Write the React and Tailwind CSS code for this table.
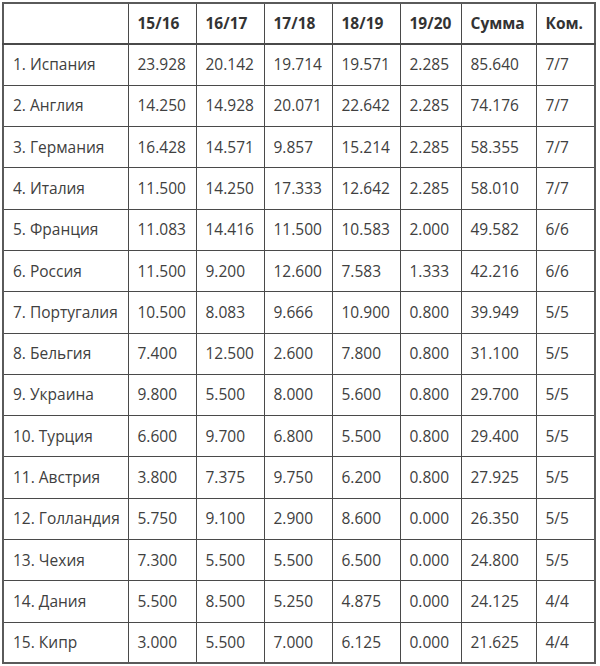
const rows = [
  ['1. Испания', '23.928', '20.142', '19.714', '19.571', '2.285', '85.640', '7/7'],
  ['2. Англия', '14.250', '14.928', '20.071', '22.642', '2.285', '74.176', '7/7'],
  ['3. Германия', '16.428', '14.571', '9.857', '15.214', '2.285', '58.355', '7/7'],
  ['4. Италия', '11.500', '14.250', '17.333', '12.642', '2.285', '58.010', '7/7'],
  ['5. Франция', '11.083', '14.416', '11.500', '10.583', '2.000', '49.582', '6/6'],
  ['6. Россия', '11.500', '9.200', '12.600', '7.583', '1.333', '42.216', '6/6'],
  ['7. Португалия', '10.500', '8.083', '9.666', '10.900', '0.800', '39.949', '5/5'],
  ['8. Бельгия', '7.400', '12.500', '2.600', '7.800', '0.800', '31.100', '5/5'],
  ['9. Украина', '9.800', '5.500', '8.000', '5.600', '0.800', '29.700', '5/5'],
  ['10. Турция', '6.600', '9.700', '6.800', '5.500', '0.800', '29.400', '5/5'],
  ['11. Австрия', '3.800', '7.375', '9.750', '6.200', '0.800', '27.925', '5/5'],
  ['12. Голландия', '5.750', '9.100', '2.900', '8.600', '0.000', '26.350', '5/5'],
  ['13. Чехия', '7.300', '5.500', '5.500', '6.500', '0.000', '24.800', '5/5'],
  ['14. Дания', '5.500', '8.500', '5.250', '4.875', '0.000', '24.125', '4/4'],
  ['15. Кипр', '3.000', '5.500', '7.000', '6.125', '0.000', '21.625', '4/4'],
]

const headers = ['', '15/16', '16/17', '17/18', '18/19', '19/20', 'Сумма', 'Ком.']

export default function App() {
  return (
    <div className="bg-white w-[600px] h-[666px] pt-[2px] pl-[2px]" style={{ fontFamily: '"Open Sans", sans-serif' }}>
      <table className="border-collapse table-fixed w-[592px] border-2 border-[#5a5a5a] text-[15.5px] text-[#404040]">
        <colgroup>
          <col className="w-[125px]" />
          <col className="w-[68px]" />
          <col className="w-[68px]" />
          <col className="w-[68px]" />
          <col className="w-[68px]" />
          <col className="w-[61px]" />
          <col className="w-[75px]" />
          <col className="w-[59px]" />
        </colgroup>
        <thead>
          <tr className="h-[41px]">
            {headers.map((h, i) => (
              <th key={i} className="border border-b-2 border-[#4a4a4a] pl-[9px] text-left font-bold text-[#333]">
                {h}
              </th>
            ))}
          </tr>
        </thead>
        <tbody>
          {rows.map((r, ri) => (
            <tr key={ri} className="h-[41.3px]">
              {r.map((c, ci) => (
                <td key={ci} className="border border-[#4a4a4a] pl-[9px] whitespace-nowrap">
                  {c}
                </td>
              ))}
            </tr>
          ))}
        </tbody>
      </table>
    </div>
  )
}
